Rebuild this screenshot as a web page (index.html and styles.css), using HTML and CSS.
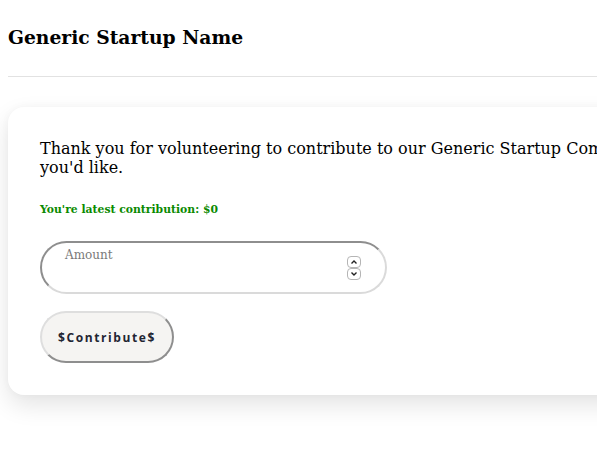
FILE: index.html
```html
<!DOCTYPE html>
<html lang="en">
<head>
<meta charset="utf-8">
<title>Generic Startup Name</title>
<link rel="stylesheet" href="styles.css">
</head>
<body>
<div class="page">
  <header class="site-header">
    <h2 class="brand">Generic Startup Name</h2>
  </header>
  <hr class="divider">
  <main class="card">
    <p class="intro">Thank you for volunteering to contribute to our Generic Startup Community! Please contribute as much as<br>you'd like.</p>
    <p class="latest">You're latest contribution: $0</p>
    <form class="contribute-form">
      <div class="field">
        <label class="field-label" for="amount">Amount</label>
        <input class="amount" id="amount" type="number">
        <span class="spinner" aria-hidden="true">
          <span class="spin-btn"><svg width="8" height="6" viewBox="0 0 8 6"><path d="M1.5 4.5 L4 2 L6.5 4.5" fill="none" stroke="#222" stroke-width="1.4"/></svg></span>
          <span class="spin-btn"><svg width="8" height="6" viewBox="0 0 8 6"><path d="M1.5 1.5 L4 4 L6.5 1.5" fill="none" stroke="#222" stroke-width="1.4"/></svg></span>
        </span>
      </div>
      <button class="contribute-btn" type="button">$Contribute$</button>
    </form>
  </main>
</div>
</body>
</html>
```
FILE: styles.css
```css
html {
  overflow: hidden;
  background: #ffffff;
}

body {
  margin: 0;
  padding: 0 0 60px;
  font-family: "DejaVu Serif", serif;
  color: #000;
}

.page {
  width: 1000px;
  padding: 0 8px;
}

.site-header {
  padding-top: 26px;
}

.brand {
  margin: 0;
  font-size: 18.72px;
  font-weight: bold;
  line-height: 22px;
}

.divider {
  margin: 28px 0 0;
  border: 0;
  border-top: 1px solid #e2e2e2;
  height: 0;
}

.card {
  margin-top: 30px;
  background: #fff;
  border-radius: 16px;
  box-shadow: 0 10px 24px rgba(0, 0, 0, 0.11), 0 0 8px rgba(0, 0, 0, 0.03);
  padding: 32px 32px 32px;
}

.intro {
  margin: 0;
  font-size: 16px;
  line-height: 19px;
}

.latest {
  margin: 26px 0 0;
  color: #0a8a00;
  font-size: 10.8px;
  font-weight: bold;
}

.contribute-form {
  margin-top: 25px;
  display: flex;
  flex-direction: column;
  align-items: flex-start;
  gap: 17px;
}

.field {
  position: relative;
  width: 347px;
  height: 53px;
}

.amount {
  box-sizing: border-box;
  width: 100%;
  height: 100%;
  border-radius: 27px;
  border: 2px solid;
  border-color: #8e8e8e #dadada #dadada #8e8e8e;
  background: #fff;
  padding: 0 24px;
  font-family: "DejaVu Serif", serif;
  font-size: 13px;
  outline: none;
  -moz-appearance: textfield;
  appearance: textfield;
}

.amount::-webkit-inner-spin-button,
.amount::-webkit-outer-spin-button {
  -webkit-appearance: none;
  margin: 0;
}

.field-label {
  position: absolute;
  left: 25px;
  top: 7px;
  font-size: 12px;
  color: #7a7a7a;
}

.spinner {
  position: absolute;
  left: 307px;
  top: 15px;
  display: flex;
  flex-direction: column;
}

.spin-btn {
  box-sizing: border-box;
  width: 14px;
  height: 12px;
  border: 1px solid #b5b5b5;
  border-radius: 4px;
  display: flex;
  align-items: center;
  justify-content: center;
  background: #fff;
}

.contribute-btn {
  box-sizing: border-box;
  width: 134px;
  height: 52px;
  border-radius: 26px;
  border: 2px solid;
  border-color: #dedede #8e8e8e #8e8e8e #dedede;
  background: #f5f4f2;
  font-family: "Open Sans", sans-serif;
  font-weight: bold;
  font-size: 12px;
  letter-spacing: 1.6px;
  color: #1f2533;
  padding: 0;
}
```
